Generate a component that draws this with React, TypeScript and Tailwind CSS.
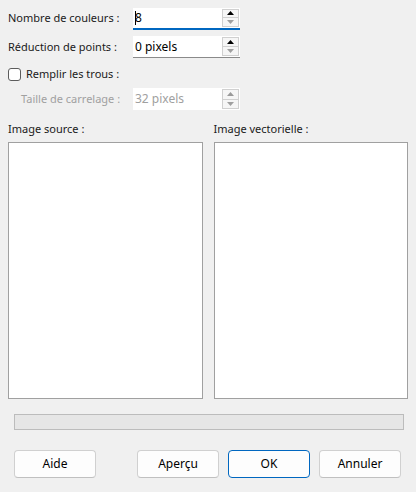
import React from 'react';

function Arrow({ up, color }: { up?: boolean; color: string }) {
    return (
        <svg width="7" height="4" viewBox="0 0 7 4" fill={color}>
            {up ? <path d="M0 4 L3.5 0 L7 4 Z" /> : <path d="M0 0 L3.5 4 L7 0 Z" />}
        </svg>
    );
}

function Spin({ value, focused, disabled }: { value: string; focused?: boolean; disabled?: boolean }) {
    const border = focused ? 'border-b-[#0067c0] border-b-2' : disabled ? 'border-b-0' : 'border-b-[#8a8a8a] border-b';
    return (
        <div className={`flex shrink-0 w-[107px] h-[22px] bg-white ${border} ${disabled ? 'bg-[#fafafa]' : ''}`}>
            <div className={`flex-1 flex items-center pl-[2px] text-[12px] ${disabled ? 'text-[#a0a0a0]' : 'text-black'}`}>
                {focused && <span className="w-px h-[14px] bg-black -mr-px"></span>}
                {value}
            </div>
            <div className="flex flex-col w-[18px] py-px pr-px">
                <div className="flex-1 flex items-center justify-center border border-[#d0d0d0] bg-[#f6f6f6]">
                    <Arrow up color={disabled ? '#9a9a9a' : '#000000'} />
                </div>
                <div className="flex-1 flex items-center justify-center border border-t-0 border-[#d0d0d0] bg-[#f6f6f6]">
                    <Arrow color="#a0a0a0" />
                </div>
            </div>
        </div>
    );
}

function Btn({ label, primary }: { label: string; primary?: boolean }) {
    return (
        <button className={`w-[82px] h-[28px] rounded-[4px] bg-[#fdfdfd] text-[12px] text-black border ${primary ? 'border-[#0067c0]' : 'border-[#d0d0d0] border-b-[#c0c0c0]'}`}>
            {label}
        </button>
    );
}

export default function App() {
    return (
        <div className="w-[416px] h-[492px] bg-[#f0f0f0] text-[#1a1a1a] flex flex-col text-[11px]" style={{ fontFamily: '"Noto Sans", "Open Sans", sans-serif' }}>
            <div className="flex flex-col pt-[7px] pl-[8px]">
                <div className="flex items-center h-[23px]">
                    <span className="w-[125px] shrink-0">Nombre de couleurs :</span>
                    <Spin value="8" focused />
                </div>
                <div className="flex items-center h-[22px] mt-[6px]">
                    <span className="w-[125px] shrink-0">Réduction de points :</span>
                    <Spin value="0 pixels" />
                </div>
                <div className="flex items-center h-[14px] mt-[9px]">
                    <span className="w-[13px] h-[13px] rounded-[3px] border border-[#5c5c5c] bg-white mr-[5px]"></span>
                    <span>Remplir les trous :</span>
                </div>
                <div className="flex items-center h-[20px] mt-[8px]">
                    <span className="w-[125px] shrink-0 pl-[13px] text-[#a0a0a0]">Taille de carrelage :</span>
                    <Spin value="32 pixels" disabled />
                </div>
            </div>
            <div className="flex gap-[11px] px-[8px] mt-[14px]">
                <div className="flex flex-col w-[195px]">
                    <span className="leading-none h-[19px]">Image source :</span>
                    <div className="h-[257px] bg-white border border-[#a0a0a0]"></div>
                </div>
                <div className="flex flex-col w-[195px]">
                    <span className="leading-none h-[19px]">Image vectorielle :</span>
                    <div className="h-[257px] bg-white border border-[#a0a0a0]"></div>
                </div>
            </div>
            <div className="ml-[14px] mr-[12px] mt-[15px] h-[16px] bg-[#e6e6e6] border border-[#bcbcbc]"></div>
            <div className="flex px-[14px] mt-[20px]">
                <Btn label="Aide" />
                <div className="flex-1"></div>
                <div className="flex gap-[9px] pr-[1px]">
                    <Btn label="Aperçu" />
                    <Btn label="OK" primary />
                    <Btn label="Annuler" />
                </div>
            </div>
        </div>
    );
}
